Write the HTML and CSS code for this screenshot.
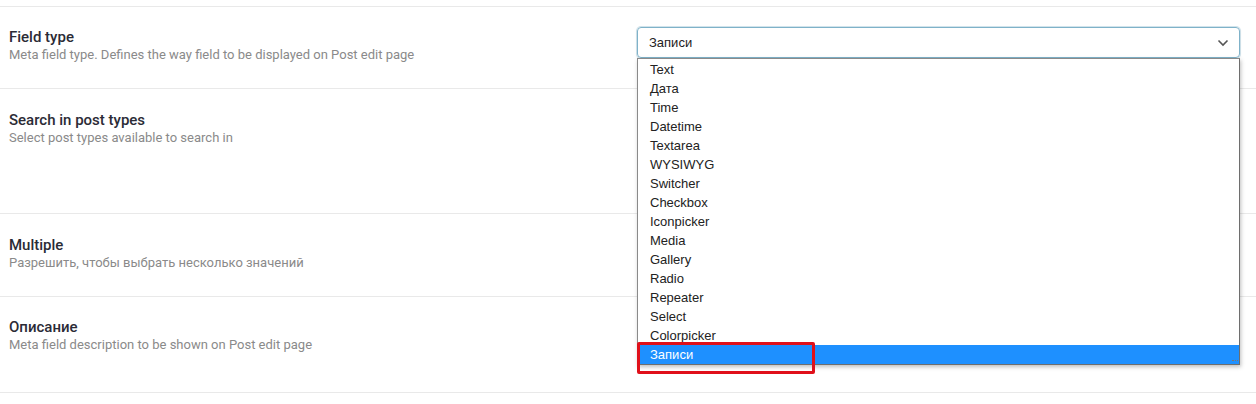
FILE: index.html
```html
<!DOCTYPE html>
<html>
<head>
<meta charset="utf-8">
<link rel="stylesheet" href="styles.css">
</head>
<body>
<div class="page">
  <div class="row row-1">
    <div class="label">
      <div class="title">Field type</div>
      <div class="desc">Meta field type. Defines the way field to be displayed on Post edit page</div>
    </div>
    <div class="control">
      <div class="select">
        <span class="value">Записи</span>
        <svg class="chev" width="12" height="8" viewBox="0 0 12 8"><path d="M1.5 1.5 L6 6 L10.5 1.5" fill="none" stroke="#555" stroke-width="1.6"/></svg>
      </div>
      <div class="menu">
        <div class="opt">Text</div>
        <div class="opt">Дата</div>
        <div class="opt">Time</div>
        <div class="opt">Datetime</div>
        <div class="opt">Textarea</div>
        <div class="opt">WYSIWYG</div>
        <div class="opt">Switcher</div>
        <div class="opt">Checkbox</div>
        <div class="opt">Iconpicker</div>
        <div class="opt">Media</div>
        <div class="opt">Gallery</div>
        <div class="opt">Radio</div>
        <div class="opt">Repeater</div>
        <div class="opt">Select</div>
        <div class="opt">Colorpicker</div>
        <div class="opt selected">Записи</div>
        <div class="grip"></div>
      </div>
      <div class="annot"></div>
    </div>
  </div>
  <div class="row row-2">
    <div class="label">
      <div class="title">Search in post types</div>
      <div class="desc">Select post types available to search in</div>
    </div>
  </div>
  <div class="row row-3">
    <div class="label">
      <div class="title">Multiple</div>
      <div class="desc">Разрешить, чтобы выбрать несколько значений</div>
    </div>
  </div>
  <div class="row row-4">
    <div class="label">
      <div class="title">Описание</div>
      <div class="desc">Meta field description to be shown on Post edit page</div>
    </div>
  </div>
</div>
</body>
</html>
```
FILE: styles.css
```css
html, body {
  margin: 0;
  padding: 0;
  background: #fff;
}
body {
  font-family: Roboto, "Liberation Sans", sans-serif;
  width: 1256px;
  height: 404px;
  overflow: hidden;
}
.page {
  padding-top: 6px;
}
.row {
  display: flex;
  border-top: 1px solid #e9e9e9;
  padding-left: 9px;
  padding-right: 16px;
  box-sizing: border-box;
}
.row-4 {
  border-bottom: 1px solid #e9e9e9;
}
.row-1 { height: 82px; padding-top: 20px; }
.row-2 { height: 125px; padding-top: 21px; }
.row-3 { height: 83px; padding-top: 21px; }
.row-4 { height: 97px; padding-top: 20px; }
.label {
  flex: 1;
}
.title {
  font-size: 15px;
  font-weight: 500;
  color: #2b2b36;
  line-height: 20px;
}
.desc {
  font-size: 13px;
  color: #8a8a8a;
  line-height: 16px;
}
.control {
  width: 603px;
  position: relative;
}
.select {
  height: 31px;
  box-sizing: border-box;
  border: 1px solid #7fb2c9;
  border-radius: 4px;
  display: flex;
  align-items: center;
  padding-left: 11px;
  padding-right: 10px;
  box-shadow: 0 0 0 1px rgba(127,178,201,0.35), 0 1px 3px rgba(0,0,0,0.08);
}
.value {
  flex: 1;
  font-family: "Liberation Sans", Arial, sans-serif;
  font-size: 13px;
  color: #222;
}
.chev {
  display: block;
}
.menu {
  position: absolute;
  left: 0;
  right: 0;
  top: 31px;
  background: #fff;
  border: 1px solid #8a8a8a;
  border-right-color: #6e6e6e;
  border-bottom-color: #6e6e6e;
  padding-top: 1px;
  box-shadow: 1px 2px 4px rgba(0,0,0,0.25);
  z-index: 2;
}
.opt {
  height: 19px;
  line-height: 19px;
  padding-left: 12px;
  font-family: "Liberation Sans", Arial, sans-serif;
  font-size: 13px;
  color: #222;
}
.opt.selected {
  background: #1e90ff;
  color: #fff;
}
.grip {
  position: absolute;
  right: 1px;
  bottom: 0;
  width: 6px;
  height: 3px;
  border-top: 1px dotted #777;
}
.annot {
  position: absolute;
  left: 0;
  top: 315px;
  width: 178px;
  height: 32px;
  box-sizing: border-box;
  border: 3px solid #e0101a;
  border-radius: 2px;
  z-index: 3;
}
```
